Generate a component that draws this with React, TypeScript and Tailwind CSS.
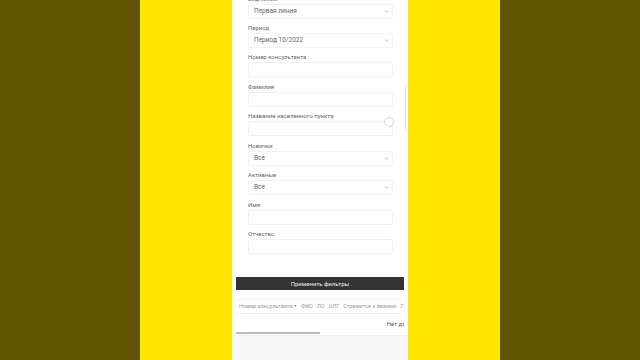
import React from "react";

type Field = { label: string; kind: "select" | "input"; value?: string; spinner?: boolean };

const fields: Field[] = [
  { label: "Вид линии", kind: "select", value: "Первая линия" },
  { label: "Период", kind: "select", value: "Период 10/2022" },
  { label: "Номер консультанта", kind: "input" },
  { label: "Фамилия", kind: "input" },
  { label: "Название населенного пункта", kind: "input", spinner: true },
  { label: "Новички", kind: "select", value: "Все" },
  { label: "Активные", kind: "select", value: "Все" },
  { label: "Имя", kind: "input" },
  { label: "Отчество", kind: "input" },
];

const columns = ["ФИО", "ЛО", "ОЛГ", "Стремится к званию", "ГС"];

function Chevron() {
  return (
    <svg width="5" height="3" viewBox="0 0 5 3" className="text-[#a5a5a5]">
      <path d="M0.5 0.5 L2.5 2.5 L4.5 0.5" fill="none" stroke="currentColor" strokeWidth="0.6" />
    </svg>
  );
}

function FormGroup({ field }: { field: Field }) {
  return (
    <div className="relative mb-[4.43px]">
      <div className="h-[10px] leading-[10px] text-[6px] text-[#666]">{field.label}</div>
      {field.kind === "select" ? (
        <div className="flex h-[15px] items-center justify-between rounded-[2px] border border-[#f3f3f3] pl-[5px] pr-[3px] text-[6.5px] text-[#666]">
          <span className="pt-[1px]">{field.value}</span>
          <Chevron />
        </div>
      ) : (
        <div className="h-[15px] rounded-[2px] border border-[#f1f1f1]" />
      )}
      {field.spinner && (
        <div className="absolute right-[-1px] top-[6px] h-[10px] w-[10px] rounded-full border border-[#d4d4d4] bg-white" />
      )}
    </div>
  );
}

export default function App() {
  return (
    <div className="flex h-[360px] w-[640px] overflow-hidden bg-[#5e5300] font-['Roboto',sans-serif]">
      <div className="w-[140px]" />
      <div className="flex w-[360px] bg-[#ffe600] px-[92px]">
        <div className="relative flex w-[176px] flex-col bg-white">
          <div className="h-[266px] overflow-hidden">
            <div className="mt-[-6.43px] pl-[16px] pr-[15px]">
              {fields.map((f) => (
                <FormGroup key={f.label} field={f} />
              ))}
            </div>
          </div>
          <div className="absolute right-[2px] top-[84px] h-[48px] w-px bg-[#e6e6e6]" />

          <div className="px-[4px] pt-[11px]">
            <button
              type="button"
              className="flex h-[13px] w-full items-center justify-center bg-[#333333] text-[6px] font-normal text-[#f0f0f0]"
            >
              Применить фильтры
            </button>
          </div>

          <div className="mx-[4px] mt-[9px] border-t border-[#f0f0f0]">
            <div className="flex h-[14px] items-center gap-[4px] overflow-hidden whitespace-nowrap border-b border-[#f0f0f0] pl-[3px] text-[5.5px] text-[#9a9a9a]">
              <span className="flex items-center gap-[1px]">
                Номер консультанта
                <span className="text-[3.5px] text-[#777]">▼</span>
              </span>
              {columns.map((c) => (
                <span key={c}>{c}</span>
              ))}
            </div>
            <div className="flex h-[18px] items-center justify-end overflow-hidden whitespace-nowrap text-[6px] text-[#555]">
              <span className="mr-[-16px]">Нет данных</span>
            </div>
            <div className="h-[2px] w-[84px] bg-[#b8b8b8]" />
          </div>
          <div className="mt-[1px] flex-1 border-t border-[#f0f0f0] bg-[#f8f8f8]" />
        </div>
      </div>
      <div className="w-[140px]" />
    </div>
  );
}
